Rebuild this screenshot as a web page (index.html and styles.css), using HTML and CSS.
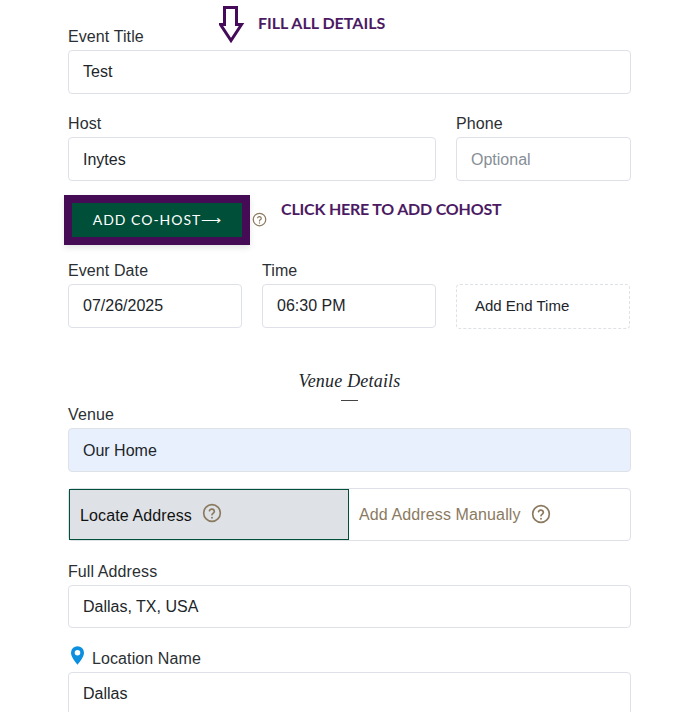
FILE: index.html
```html
<!DOCTYPE html>
<html lang="en">
<head>
<meta charset="utf-8">
<title>Event Form</title>
<link rel="stylesheet" href="styles.css">
</head>
<body>
<main class="form">
  <svg class="note-arrow" width="26" height="38" viewBox="0 0 26 38" aria-hidden="true"><path d="M5.500 1.500H17.500V18.500H22.500L12 34.500L1.500 18.500H5.500Z" fill="none" stroke="#450b5a" stroke-width="3"/></svg>
  <span class="note note-fill">FILL ALL DETAILS</span>
  <span class="note note-click">CLICK HERE TO ADD COHOST</span>

  <div class="field title-field">
    <label class="label">Event Title</label>
    <input class="input" value="Test">
  </div>

  <div class="row row-host">
    <div class="field">
      <label class="label">Host</label>
      <input class="input input-low" value="Inytes">
    </div>
    <div class="field">
      <label class="label">Phone</label>
      <input class="input input-low" placeholder="Optional">
    </div>
  </div>

  <div class="cohost">
    <button class="cohost-btn">ADD CO-HOST<span class="cohost-arrow">⟶</span></button>
    <svg class="help help-small" viewBox="0 0 24 24" aria-hidden="true"><circle cx="12" cy="12" r="10"/><path d="M9 9.200a3 3 0 0 1 5.800 1c0 2-2.800 2.400-2.800 4"/><path class="dot" d="M12 17.500v.2"/></svg>
  </div>

  <div class="row row-date">
    <div class="field">
      <label class="label">Event Date</label>
      <input class="input" value="07/26/2025">
    </div>
    <div class="field">
      <label class="label">Time</label>
      <input class="input" value="06:30 PM">
    </div>
    <button class="end-time">Add End Time</button>
  </div>

  <h2 class="section-title">Venue Details</h2>
  <div class="section-rule"></div>

  <div class="field venue-field">
    <label class="label">Venue</label>
    <input class="input input-filled input-low" value="Our Home">
  </div>

  <div class="tabs">
    <div class="tab tab-active">Locate Address
      <svg class="help" viewBox="0 0 24 24" aria-hidden="true"><circle cx="12" cy="12" r="10"/><path d="M9 9.200a3 3 0 0 1 5.800 1c0 2-2.800 2.400-2.800 4"/><path class="dot" d="M12 17.500v.2"/></svg>
    </div>
    <div class="tab tab-plain">Add Address Manually
      <svg class="help" viewBox="0 0 24 24" aria-hidden="true"><circle cx="12" cy="12" r="10"/><path d="M9 9.200a3 3 0 0 1 5.800 1c0 2-2.800 2.400-2.800 4"/><path class="dot" d="M12 17.500v.2"/></svg>
    </div>
  </div>

  <div class="field address-field">
    <label class="label">Full Address</label>
    <input class="input" value="Dallas, TX, USA">
  </div>

  <div class="field location-field">
    <label class="label label-pin">
      <svg class="pin" width="13" height="19" viewBox="0 0 14 20" aria-hidden="true"><path fill-rule="evenodd" d="M7 0a7 7 0 0 1 7 7c0 4.500-4.500 9.500-7 13C4.500 16.500 0 11.500 0 7a7 7 0 0 1 7-7Zm0 4a3 3 0 1 0 0 6 3 3 0 0 0 0-6Z" fill="#0d8fe0"/></svg>
      Location Name
    </label>
    <input class="input" value="Dallas">
  </div>
</main>
</body>
</html>
```
FILE: styles.css
```css
* { box-sizing: border-box; }
html, body { margin: 0; height: 712px; overflow: hidden; background: #fff; }
body { font-family: "Liberation Sans", Arial, sans-serif; color: #212529; }

.form {
  position: relative;
  width: 563px;
  margin-left: 68px;
  padding-top: 28px;
}

.field { display: flex; flex-direction: column; min-width: 0; }
.label { display: block; font-size: 16px; line-height: 18px; margin-bottom: 4px; color: #2b2f33; letter-spacing: .1px; }
.input {
  width: 100%;
  height: 44px;
  padding: 0 14px;
  border: 1px solid #dfe1e8;
  border-radius: 4px;
  background: #fff;
  font: 16px "Liberation Sans", Arial, sans-serif;
  color: #212529;
  outline: none;
}
.input-low { padding-top: 2px; }
.input::placeholder { color: #868e96; opacity: 1; }
.input-filled { background: #e8f0fe; }

.row { display: grid; gap: 20px; }
.row-host { grid-template-columns: 368px 175px; margin-top: 21px; }
.row-date { grid-template-columns: 174px 174px 174px; margin-top: 17px; align-items: start; }

.cohost { display: flex; align-items: center; gap: 2px; margin: 14px 0 0 -4px; height: 50px; }
.cohost-btn {
  width: 186px;
  height: 50px;
  padding: 0 0 2px;
  border: 8px solid #450b55;
  background: #004f38;
  color: #fff;
  font: 14px Lato, sans-serif;
  letter-spacing: 1px;
  cursor: pointer;
  box-shadow: 0 3px 6px rgba(0, 0, 0, .1);
}
.cohost-arrow { letter-spacing: 0; }

.help { width: 20px; height: 20px; margin-bottom: 2px; fill: none; stroke: #8b7a5f; stroke-width: 2; stroke-linecap: round; }
.help-small { width: 15px; height: 15px; margin: -2px 0 0 0; }
.dot { stroke-width: 2.200; }

.end-time {
  height: 45px;
  margin-top: 22px;
  padding: 0 0 2px 18px;
  border: 1px dashed #dfe1e8;
  border-radius: 4px;
  background: #fff;
  text-align: left;
  font: 15px "Liberation Sans", Arial, sans-serif;
  color: #212529;
}

.section-title {
  margin: 40px 0 0;
  text-align: center;
  font: italic 400 18px/24px "Liberation Serif", serif;
  color: #212529;
  letter-spacing: .2px;
}
.section-rule { width: 17px; height: 1px; margin: 7px auto 0; background: #444; }

.venue-field { margin-top: 5px; }

.tabs {
  display: flex;
  height: 53px;
  margin-top: 16px;
  border: 1px solid #dfe1e8;
  border-radius: 4px;
}
.tab { display: flex; align-items: center; gap: 10px; font-size: 16px; letter-spacing: .12px; }
.tab-active {
  width: 280px;
  padding: 2px 0 0 10px;
  background: #dee1e6;
  border: 1px solid #00503a;
  color: #111;
}
.tab-active .help { margin-bottom: 5px; }
.tab-plain { padding-left: 10px; color: #8b7a5f; }

.address-field { margin-top: 22px; }
.address-field .input { height: 43px; }
.location-field { margin-top: 22px; }
.label-pin { display: flex; align-items: center; gap: 8px; margin-left: 3px; }
.pin { margin-top: -7px; }

.note { position: absolute; font: 700 16px/20px Lato, sans-serif; color: #4b1a63; white-space: nowrap; }
.note-fill { left: 190px; top: 13px; }
.note-click { left: 213px; top: 199px; letter-spacing: -.2px; }
.note-arrow { position: absolute; left: 151px; top: 6px; }
```
